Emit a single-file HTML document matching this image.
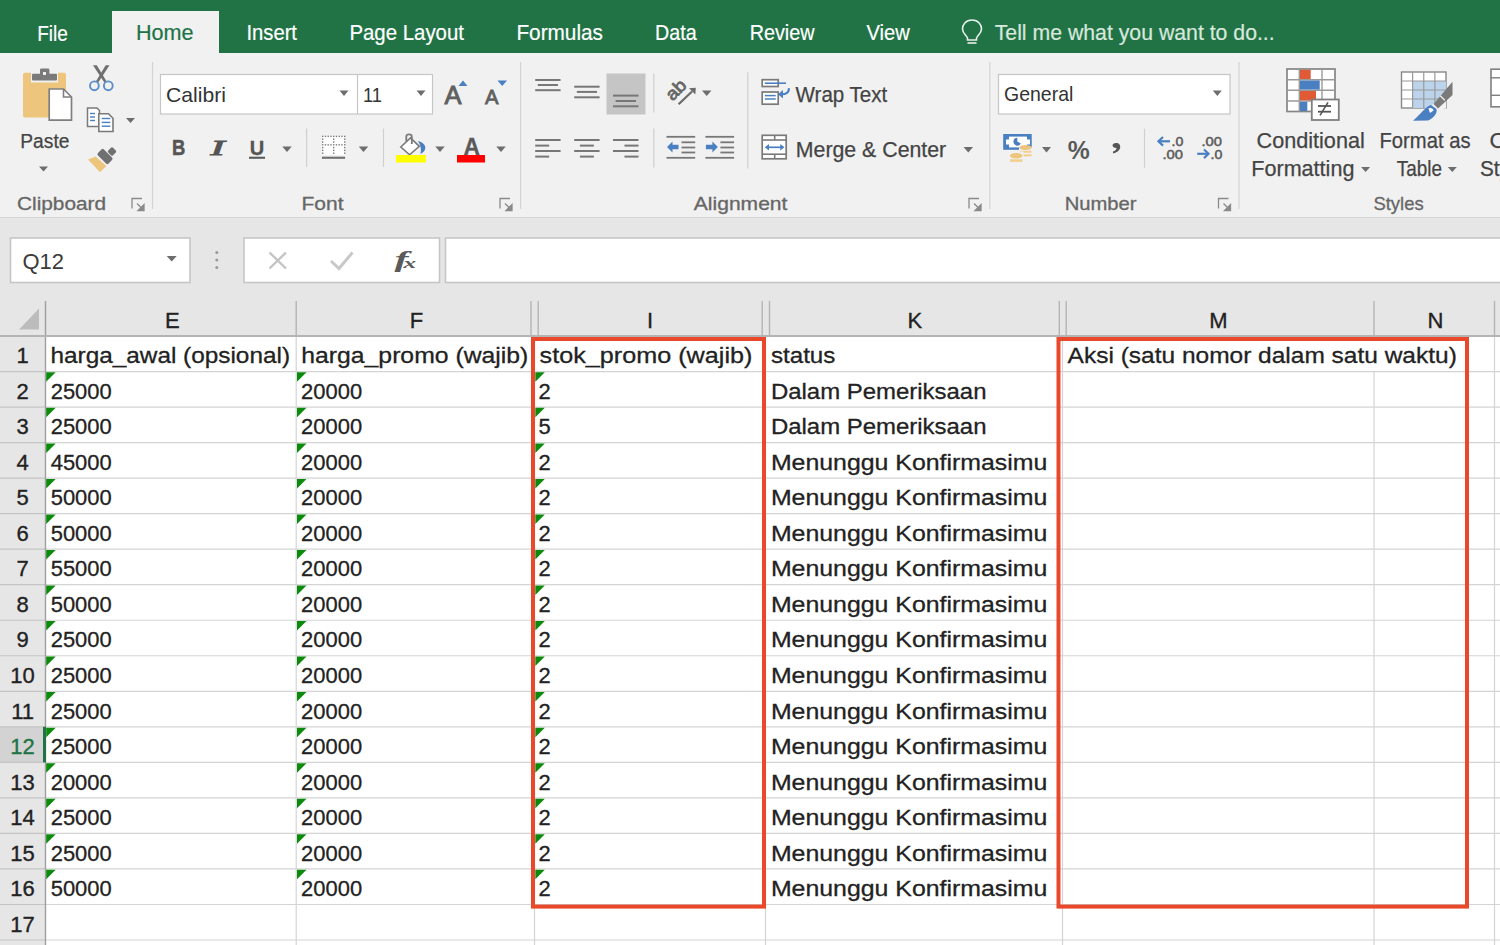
<!DOCTYPE html>
<html><head><meta charset="utf-8"><title>Excel</title>
<style>
html,body{margin:0;padding:0;background:#fff;overflow:hidden;width:1500px;height:945px;}
svg{display:block;font-family:"Liberation Sans",sans-serif;}
</style></head><body>
<svg width="1500" height="945" viewBox="0 0 1500 945"><rect x="0" y="0" width="1500" height="53" fill="#217346"/>
<rect x="0" y="53" width="1500" height="165" fill="#f1f1f1"/>
<rect x="112" y="11" width="107" height="42" fill="#f1f1f1"/>
<rect x="0" y="217" width="1500" height="1" fill="#d6d6d6"/>
<rect x="0" y="218" width="1500" height="83" fill="#e6e6e6"/>
<text x="37.2" y="41.3" font-size="22" fill="#ffffff" font-weight="normal" font-style="normal" font-family="Liberation Sans" textLength="30.6" lengthAdjust="spacingAndGlyphs" stroke="#ffffff" stroke-width="0.2">File</text>
<text x="246.4" y="39.6" font-size="22" fill="#ffffff" font-weight="normal" font-style="normal" font-family="Liberation Sans" textLength="50.6" lengthAdjust="spacingAndGlyphs" stroke="#ffffff" stroke-width="0.2">Insert</text>
<text x="349.4" y="39.6" font-size="22" fill="#ffffff" font-weight="normal" font-style="normal" font-family="Liberation Sans" textLength="114.6" lengthAdjust="spacingAndGlyphs" stroke="#ffffff" stroke-width="0.2">Page Layout</text>
<text x="516.4" y="39.6" font-size="22" fill="#ffffff" font-weight="normal" font-style="normal" font-family="Liberation Sans" textLength="86.6" lengthAdjust="spacingAndGlyphs" stroke="#ffffff" stroke-width="0.2">Formulas</text>
<text x="655.0" y="39.6" font-size="22" fill="#ffffff" font-weight="normal" font-style="normal" font-family="Liberation Sans" textLength="41.6" lengthAdjust="spacingAndGlyphs" stroke="#ffffff" stroke-width="0.2">Data</text>
<text x="749.7" y="39.6" font-size="22" fill="#ffffff" font-weight="normal" font-style="normal" font-family="Liberation Sans" textLength="64.8" lengthAdjust="spacingAndGlyphs" stroke="#ffffff" stroke-width="0.2">Review</text>
<text x="866.5" y="39.6" font-size="22" fill="#ffffff" font-weight="normal" font-style="normal" font-family="Liberation Sans" textLength="43.3" lengthAdjust="spacingAndGlyphs" stroke="#ffffff" stroke-width="0.2">View</text>
<text x="136.0" y="39.6" font-size="22" fill="#217346" font-weight="normal" font-style="normal" font-family="Liberation Sans" textLength="57.6" lengthAdjust="spacingAndGlyphs" stroke="#217346" stroke-width="0.2">Home</text>
<text x="994.7" y="39.6" font-size="22" fill="#d8e8dd" font-weight="normal" font-style="normal" font-family="Liberation Sans" textLength="280.0" lengthAdjust="spacingAndGlyphs" stroke="#d8e8dd" stroke-width="0.2">Tell me what you want to do...</text>
<path d="M972,20 C965.5,20 962.5,25 962.5,29 C962.5,33 966,35 967.5,38 L967.5,40 L976.5,40 L976.5,38 C978,35 981.5,33 981.5,29 C981.5,25 978.5,20 972,20 Z" fill="none" stroke="#e6f0ea" stroke-width="1.6"/>
<line x1="967.5" y1="43" x2="976.5" y2="43" stroke="#e6f0ea" stroke-width="1.6"/>
<path d="M25,72.7 L31,72.7 L31,82.5 L58,82.5 L58,72.7 L64,72.7 Q66,72.7 66,74.7 L66,115.5 Q66,117.5 64,117.5 L25,117.5 Q23,117.5 23,115.5 L23,74.7 Q23,72.7 25,72.7 Z" fill="#edc57c" stroke="none" stroke-width="1"/>
<path d="M33,73.8 L40,73.8 L40,70 Q40,68.6 41.4,68.6 L48,68.6 Q49.4,68.6 49.4,70 L49.4,73.8 L56,73.8 Q57,73.8 57,75 L57,79.5 Q57,80.6 56,80.6 L33,80.6 Q32,80.6 32,79.5 L32,75 Q32,73.8 33,73.8 Z" fill="#7a7a7a" stroke="none" stroke-width="1"/>
<rect x="43" y="72" width="3" height="3" fill="#f1f1f1"/>
<path d="M49.2,89 L63.5,89 L71.5,97 L71.5,120.2 L49.2,120.2 Z" fill="#ffffff" stroke="#7f7f7f" stroke-width="1.7"/>
<path d="M63.5,89 L63.5,97 L71.5,97" fill="none" stroke="#7f7f7f" stroke-width="1.6"/>
<text x="20.3" y="147.8" font-size="20.5" fill="#444" font-weight="normal" font-style="normal" font-family="Liberation Sans" textLength="49.1" lengthAdjust="spacingAndGlyphs" stroke="#444" stroke-width="0.25">Paste</text>
<path d="M39.0,166.5 L48.0,166.5 L43.5,171.5 Z" fill="#6d6d6d" stroke="none" stroke-width="1"/>
<path d="M93,65.2 L96.8,65.2 L106.5,81.2 L104.3,82.6 Z" fill="#6f6f6f" stroke="none" stroke-width="1"/>
<path d="M109.5,65.2 L105.7,65.2 L96,81.2 L98.2,82.6 Z" fill="#6f6f6f" stroke="none" stroke-width="1"/>
<circle cx="94.4" cy="85.8" r="4.4" fill="none" stroke="#5b8fcb" stroke-width="1.9"/>
<circle cx="108.3" cy="85.8" r="4.4" fill="none" stroke="#5b8fcb" stroke-width="1.9"/>
<path d="M87.5,108 L97,108 L99.5,110.5 L99.5,126.5 L87.5,126.5 Z" fill="#fff" stroke="#7a7a7a" stroke-width="1.5"/>
<path d="M98.8,113.8 L108.5,113.8 L113,118.3 L113,131.5 L98.8,131.5 Z" fill="#fff" stroke="#7a7a7a" stroke-width="1.6"/>
<line x1="90" y1="113.5" x2="95" y2="113.5" stroke="#4a7fc1" stroke-width="1.4"/>
<line x1="90" y1="117" x2="95" y2="117" stroke="#4a7fc1" stroke-width="1.4"/>
<line x1="90" y1="120.5" x2="95" y2="120.5" stroke="#4a7fc1" stroke-width="1.4"/>
<line x1="101.7" y1="118.5" x2="110.3" y2="118.5" stroke="#4a7fc1" stroke-width="1.4"/>
<line x1="101.7" y1="122.4" x2="110.3" y2="122.4" stroke="#4a7fc1" stroke-width="1.4"/>
<line x1="101.7" y1="126.2" x2="110.3" y2="126.2" stroke="#4a7fc1" stroke-width="1.4"/>
<path d="M126.0,118 L135.0,118 L130.5,123 Z" fill="#6d6d6d" stroke="none" stroke-width="1"/>
<path d="M88,159.5 L95.5,156.5 L106.5,166 L100,172.3 Z" fill="#edc57c" stroke="none" stroke-width="1"/>
<rect x="-7.5" y="-4.2" width="15" height="8.4" rx="1.8" fill="#707070" transform="translate(105,156.5) rotate(45)"/>
<rect x="-3.4" y="-3.4" width="6.8" height="6.8" rx="1.5" fill="#707070" transform="translate(112,151.5) rotate(45)"/>
<text x="17.0" y="210.2" font-size="18.5" fill="#666" font-weight="normal" font-style="normal" font-family="Liberation Sans" textLength="89.0" lengthAdjust="spacingAndGlyphs" stroke="#666" stroke-width="0.3">Clipboard</text>
<path d="M132,208.5 L132,198.5 L142,198.5" fill="none" stroke="#8a8a8a" stroke-width="1.3"/>
<path d="M137,203.5 L143,209.5 M144,204.5 L144,210.5 L138,210.5 Z" fill="#8a8a8a" stroke="#8a8a8a" stroke-width="1.3"/>
<line x1="152.5" y1="62" x2="152.5" y2="209" stroke="#d4d4d4" stroke-width="1.2"/>
<rect x="160.5" y="74.5" width="272" height="39.5" fill="#ffffff" stroke="#c6c6c6" stroke-width="1.2"/>
<line x1="357.5" y1="75" x2="357.5" y2="114" stroke="#c6c6c6" stroke-width="1.2"/>
<text x="166.0" y="101.6" font-size="21" fill="#333" font-weight="normal" font-style="normal" font-family="Liberation Sans" textLength="60.0" lengthAdjust="spacingAndGlyphs">Calibri</text>
<path d="M339.5,90.5 L348.5,90.5 L344,96.0 Z" fill="#6d6d6d" stroke="none" stroke-width="1"/>
<text x="363.0" y="101.6" font-size="21" fill="#333" font-weight="normal" font-style="normal" font-family="Liberation Sans" textLength="19.0" lengthAdjust="spacingAndGlyphs">11</text>
<path d="M416.5,90.5 L425.5,90.5 L421,96.0 Z" fill="#6d6d6d" stroke="none" stroke-width="1"/>
<text x="444.5" y="104.0" font-size="25" fill="#606060" font-weight="normal" font-style="normal" font-family="Liberation Sans" textLength="17.0" lengthAdjust="spacingAndGlyphs" stroke="#606060" stroke-width="0.9">A</text>
<path d="M458.5,86 L467.5,86 L463,80.5 Z" fill="#4a7fc1" stroke="none" stroke-width="1"/>
<text x="485.0" y="104.0" font-size="20" fill="#606060" font-weight="normal" font-style="normal" font-family="Liberation Sans" textLength="13.5" lengthAdjust="spacingAndGlyphs" stroke="#606060" stroke-width="0.8">A</text>
<path d="M497.5,80.5 L507,80.5 L502.2,86 Z" fill="#4a7fc1" stroke="none" stroke-width="1"/>
<text x="172.0" y="155.3" font-size="21.5" fill="#555" font-weight="bold" font-style="normal" font-family="Liberation Sans" textLength="13.3" lengthAdjust="spacingAndGlyphs" stroke="#555" stroke-width="0.5">B</text>
<text x="210.5" y="155.3" font-size="21.5" fill="#555" font-weight="normal" font-style="italic" font-family="Liberation Serif" textLength="14.0" lengthAdjust="spacingAndGlyphs" stroke="#555" stroke-width="0.9">I</text>
<text x="249.8" y="155.0" font-size="21" fill="#555" font-weight="bold" font-style="normal" font-family="Liberation Sans" textLength="14.5" lengthAdjust="spacingAndGlyphs" stroke="#555" stroke-width="0.3">U</text>
<rect x="249" y="156.7" width="16" height="2.1" fill="#5a5a5a"/>
<path d="M282.25,146.5 L291.75,146.5 L287,152.0 Z" fill="#6d6d6d" stroke="none" stroke-width="1"/>
<line x1="306.6" y1="128.5" x2="306.6" y2="167" stroke="#d0d0d0" stroke-width="1.2"/>
<rect x="322" y="136" width="23" height="19" fill="#ffffff"/>
<rect x="322.0" y="135.7" width="1.4" height="1.4" fill="#7a7a7a"/>
<rect x="322.0" y="138.5" width="1.4" height="1.4" fill="#7a7a7a"/>
<rect x="322.0" y="141.3" width="1.4" height="1.4" fill="#7a7a7a"/>
<rect x="322.0" y="144.1" width="1.4" height="1.4" fill="#7a7a7a"/>
<rect x="322.0" y="146.9" width="1.4" height="1.4" fill="#7a7a7a"/>
<rect x="322.0" y="149.7" width="1.4" height="1.4" fill="#7a7a7a"/>
<rect x="322.0" y="152.5" width="1.4" height="1.4" fill="#7a7a7a"/>
<rect x="324.75" y="135.7" width="1.4" height="1.4" fill="#7a7a7a"/>
<rect x="324.75" y="144.1" width="1.4" height="1.4" fill="#7a7a7a"/>
<rect x="327.5" y="135.7" width="1.4" height="1.4" fill="#7a7a7a"/>
<rect x="327.5" y="144.1" width="1.4" height="1.4" fill="#7a7a7a"/>
<rect x="330.25" y="135.7" width="1.4" height="1.4" fill="#7a7a7a"/>
<rect x="330.25" y="144.1" width="1.4" height="1.4" fill="#7a7a7a"/>
<rect x="333.0" y="135.7" width="1.4" height="1.4" fill="#7a7a7a"/>
<rect x="333.0" y="138.5" width="1.4" height="1.4" fill="#7a7a7a"/>
<rect x="333.0" y="141.3" width="1.4" height="1.4" fill="#7a7a7a"/>
<rect x="333.0" y="144.1" width="1.4" height="1.4" fill="#7a7a7a"/>
<rect x="333.0" y="146.9" width="1.4" height="1.4" fill="#7a7a7a"/>
<rect x="333.0" y="149.7" width="1.4" height="1.4" fill="#7a7a7a"/>
<rect x="333.0" y="152.5" width="1.4" height="1.4" fill="#7a7a7a"/>
<rect x="335.75" y="135.7" width="1.4" height="1.4" fill="#7a7a7a"/>
<rect x="335.75" y="144.1" width="1.4" height="1.4" fill="#7a7a7a"/>
<rect x="338.5" y="135.7" width="1.4" height="1.4" fill="#7a7a7a"/>
<rect x="338.5" y="144.1" width="1.4" height="1.4" fill="#7a7a7a"/>
<rect x="341.25" y="135.7" width="1.4" height="1.4" fill="#7a7a7a"/>
<rect x="341.25" y="144.1" width="1.4" height="1.4" fill="#7a7a7a"/>
<rect x="344.0" y="135.7" width="1.4" height="1.4" fill="#7a7a7a"/>
<rect x="344.0" y="138.5" width="1.4" height="1.4" fill="#7a7a7a"/>
<rect x="344.0" y="141.3" width="1.4" height="1.4" fill="#7a7a7a"/>
<rect x="344.0" y="144.1" width="1.4" height="1.4" fill="#7a7a7a"/>
<rect x="344.0" y="146.9" width="1.4" height="1.4" fill="#7a7a7a"/>
<rect x="344.0" y="149.7" width="1.4" height="1.4" fill="#7a7a7a"/>
<rect x="344.0" y="152.5" width="1.4" height="1.4" fill="#7a7a7a"/>
<rect x="321.9" y="156.7" width="23.2" height="2.1" fill="#6f6f6f"/>
<path d="M358.75,146.5 L368.25,146.5 L363.5,152.0 Z" fill="#6d6d6d" stroke="none" stroke-width="1"/>
<line x1="383.5" y1="128.5" x2="383.5" y2="167" stroke="#d0d0d0" stroke-width="1.2"/>
<path d="M400.8,147 L410.5,137.8 L419.3,146.3 L409.6,154.8 Z" fill="#fff" stroke="#7a7a7a" stroke-width="1.6"/>
<path d="M406.3,141.5 L406.3,136.3 Q406.3,134.3 409,134.3 Q411.8,134.3 411.8,136.3 L411.8,144" fill="none" stroke="#7a7a7a" stroke-width="1.8"/>
<path d="M418,141 C423,142 426.5,146 425,149.5 C424.3,151.5 422,153.5 420.4,154 C421.5,150 421,146 418,141 Z" fill="#4a7fc1" stroke="none" stroke-width="1"/>
<rect x="396" y="155" width="30" height="7.5" fill="#ffff00"/>
<path d="M435.25,146.5 L444.75,146.5 L440,152.0 Z" fill="#6d6d6d" stroke="none" stroke-width="1"/>
<text x="463.5" y="155.2" font-size="24" fill="#5a5a5a" font-weight="bold" font-style="normal" font-family="Liberation Sans" textLength="16.5" lengthAdjust="spacingAndGlyphs" stroke="#5a5a5a" stroke-width="0.3">A</text>
<rect x="457" y="155" width="28" height="7.5" fill="#ff0000"/>
<path d="M496.25,146.5 L505.75,146.5 L501,152.0 Z" fill="#6d6d6d" stroke="none" stroke-width="1"/>
<text x="301.5" y="210.4" font-size="18.5" fill="#666" font-weight="normal" font-style="normal" font-family="Liberation Sans" textLength="42.0" lengthAdjust="spacingAndGlyphs" stroke="#666" stroke-width="0.3">Font</text>
<path d="M500,208.5 L500,198.5 L510,198.5" fill="none" stroke="#8a8a8a" stroke-width="1.3"/>
<path d="M505,203.5 L511,209.5 M512,204.5 L512,210.5 L506,210.5 Z" fill="#8a8a8a" stroke="#8a8a8a" stroke-width="1.3"/>
<line x1="520.6" y1="62" x2="520.6" y2="209" stroke="#d4d4d4" stroke-width="1.2"/>
<line x1="535.2" y1="80" x2="560.6" y2="80" stroke="#777" stroke-width="2"/>
<line x1="537.8" y1="85" x2="558" y2="85" stroke="#777" stroke-width="2"/>
<line x1="535.2" y1="90.2" x2="560.6" y2="90.2" stroke="#777" stroke-width="2"/>
<line x1="574.2" y1="86.7" x2="599.6" y2="86.7" stroke="#777" stroke-width="2"/>
<line x1="576.8" y1="91.9" x2="597" y2="91.9" stroke="#777" stroke-width="2"/>
<line x1="574.2" y1="97.3" x2="599.6" y2="97.3" stroke="#777" stroke-width="2"/>
<rect x="606.5" y="73.5" width="39" height="41" fill="#c5c5c5"/>
<line x1="613" y1="95.6" x2="638.5" y2="95.6" stroke="#777" stroke-width="2"/>
<line x1="615.6" y1="101" x2="636" y2="101" stroke="#777" stroke-width="2"/>
<line x1="613" y1="106.3" x2="638.5" y2="106.3" stroke="#777" stroke-width="2"/>
<line x1="653.8" y1="73.5" x2="653.8" y2="112.5" stroke="#d0d0d0" stroke-width="1.2"/>
<text x="672.5" y="101.5" font-size="17.5" fill="#666" font-weight="normal" font-style="normal" font-family="Liberation Sans" textLength="21.5" lengthAdjust="spacingAndGlyphs" stroke="#666" stroke-width="0.8" transform="rotate(-45 672.5 101.5)">ab</text>
<path d="M678.6,104.3 L692,91.5" fill="none" stroke="#6a6a6a" stroke-width="2.2"/>
<path d="M695.8,87.8 L689,88.3 L695.3,94.6 Z" fill="#6a6a6a" stroke="none" stroke-width="1"/>
<path d="M701.95,90.5 L711.45,90.5 L706.7,96.0 Z" fill="#6d6d6d" stroke="none" stroke-width="1"/>
<line x1="535.2" y1="140" x2="560.6" y2="140" stroke="#777" stroke-width="2"/>
<line x1="535.2" y1="145.6" x2="549.1700000000001" y2="145.6" stroke="#777" stroke-width="2"/>
<line x1="535.2" y1="151" x2="560.6" y2="151" stroke="#777" stroke-width="2"/>
<line x1="535.2" y1="156.6" x2="549.1700000000001" y2="156.6" stroke="#777" stroke-width="2"/>
<line x1="574.2" y1="140" x2="599.6" y2="140" stroke="#777" stroke-width="2"/>
<line x1="579.9150000000001" y1="145.6" x2="593.8850000000001" y2="145.6" stroke="#777" stroke-width="2"/>
<line x1="574.2" y1="151" x2="599.6" y2="151" stroke="#777" stroke-width="2"/>
<line x1="579.9150000000001" y1="156.6" x2="593.8850000000001" y2="156.6" stroke="#777" stroke-width="2"/>
<line x1="613" y1="140" x2="638.5" y2="140" stroke="#777" stroke-width="2"/>
<line x1="624.475" y1="145.6" x2="638.5" y2="145.6" stroke="#777" stroke-width="2"/>
<line x1="613" y1="151" x2="638.5" y2="151" stroke="#777" stroke-width="2"/>
<line x1="624.475" y1="156.6" x2="638.5" y2="156.6" stroke="#777" stroke-width="2"/>
<line x1="653.8" y1="128.5" x2="653.8" y2="167.5" stroke="#d0d0d0" stroke-width="1.2"/>
<line x1="666.5" y1="136.8" x2="695.2" y2="136.8" stroke="#777" stroke-width="1.8"/>
<line x1="681.5" y1="142.3" x2="695.2" y2="142.3" stroke="#777" stroke-width="1.8"/>
<line x1="681.5" y1="147.5" x2="695.2" y2="147.5" stroke="#777" stroke-width="1.8"/>
<line x1="681.5" y1="152.5" x2="695.2" y2="152.5" stroke="#777" stroke-width="1.8"/>
<line x1="666.5" y1="157.8" x2="695.2" y2="157.8" stroke="#777" stroke-width="1.8"/>
<path d="M667.0,147 L672.5,141.5 L672.5,144.8 L678.5,144.8 L678.5,149.2 L672.5,149.2 L672.5,152.5 Z" fill="#4a7fc1" stroke="none" stroke-width="1"/>
<line x1="705.4" y1="136.8" x2="734.1" y2="136.8" stroke="#777" stroke-width="1.8"/>
<line x1="720.4" y1="142.3" x2="734.1" y2="142.3" stroke="#777" stroke-width="1.8"/>
<line x1="720.4" y1="147.5" x2="734.1" y2="147.5" stroke="#777" stroke-width="1.8"/>
<line x1="720.4" y1="152.5" x2="734.1" y2="152.5" stroke="#777" stroke-width="1.8"/>
<line x1="705.4" y1="157.8" x2="734.1" y2="157.8" stroke="#777" stroke-width="1.8"/>
<path d="M717.9,147 L712.4,141.5 L712.4,144.8 L705.9,144.8 L705.9,149.2 L712.4,149.2 L712.4,152.5 Z" fill="#4a7fc1" stroke="none" stroke-width="1"/>
<line x1="747.8" y1="72.3" x2="747.8" y2="168.5" stroke="#d0d0d0" stroke-width="1.2"/>
<rect x="762.2" y="79.7" width="16" height="6.8" fill="#fff" stroke="#7a7a7a" stroke-width="1.7"/>
<line x1="764.8" y1="83.2" x2="786" y2="83.2" stroke="#4a7fc1" stroke-width="1.6"/>
<rect x="762.2" y="92" width="16" height="12.2" fill="#fff" stroke="#7a7a7a" stroke-width="1.7"/>
<line x1="764.8" y1="95.6" x2="775.7" y2="95.6" stroke="#4a7fc1" stroke-width="1.5"/>
<line x1="764.8" y1="99" x2="775.7" y2="99" stroke="#4a7fc1" stroke-width="1.5"/>
<path d="M788.8,88.2 C789.5,92.5 786,94.5 781,94.3" fill="none" stroke="#4a7fc1" stroke-width="2"/>
<path d="M778,94.2 L783,90 L783,98.5 Z" fill="#4a7fc1" stroke="none" stroke-width="1"/>
<text x="795.5" y="101.8" font-size="21.5" fill="#444" font-weight="normal" font-style="normal" font-family="Liberation Sans" textLength="91.8" lengthAdjust="spacingAndGlyphs" stroke="#444" stroke-width="0.25">Wrap Text</text>
<rect x="762.2" y="135.3" width="24" height="23.5" fill="#fff" stroke="#7a7a7a" stroke-width="1.7"/>
<line x1="762.2" y1="140" x2="786.2" y2="140" stroke="#7a7a7a" stroke-width="1.6"/>
<line x1="762.2" y1="154.2" x2="786.2" y2="154.2" stroke="#7a7a7a" stroke-width="1.6"/>
<line x1="774.7" y1="135.3" x2="774.7" y2="140" stroke="#7a7a7a" stroke-width="1.6"/>
<line x1="774.7" y1="154.2" x2="774.7" y2="158.8" stroke="#7a7a7a" stroke-width="1.6"/>
<line x1="767" y1="147.3" x2="782" y2="147.3" stroke="#4a7fc1" stroke-width="1.7"/>
<path d="M764.8,147.3 L769,144 L769,150.6 Z M784.5,147.3 L780.3,144 L780.3,150.6 Z" fill="#4a7fc1" stroke="none" stroke-width="1"/>
<text x="795.8" y="157.0" font-size="21.5" fill="#444" font-weight="normal" font-style="normal" font-family="Liberation Sans" textLength="150.4" lengthAdjust="spacingAndGlyphs" stroke="#444" stroke-width="0.25">Merge &amp; Center</text>
<path d="M963.55,147 L973.05,147 L968.3,152.5 Z" fill="#6d6d6d" stroke="none" stroke-width="1"/>
<text x="693.8" y="210.4" font-size="18.5" fill="#666" font-weight="normal" font-style="normal" font-family="Liberation Sans" textLength="93.6" lengthAdjust="spacingAndGlyphs" stroke="#666" stroke-width="0.3">Alignment</text>
<path d="M969,208.5 L969,198.5 L979,198.5" fill="none" stroke="#8a8a8a" stroke-width="1.3"/>
<path d="M974,203.5 L980,209.5 M981,204.5 L981,210.5 L975,210.5 Z" fill="#8a8a8a" stroke="#8a8a8a" stroke-width="1.3"/>
<line x1="989.8" y1="62" x2="989.8" y2="209" stroke="#d4d4d4" stroke-width="1.2"/>
<rect x="998.5" y="74.5" width="231.5" height="39.5" fill="#ffffff" stroke="#c6c6c6" stroke-width="1.2"/>
<text x="1004.0" y="101.4" font-size="21" fill="#333" font-weight="normal" font-style="normal" font-family="Liberation Sans" textLength="69.4" lengthAdjust="spacingAndGlyphs">General</text>
<path d="M1212.8,90.5 L1221.8,90.5 L1217.3,96.0 Z" fill="#6d6d6d" stroke="none" stroke-width="1"/>
<rect x="1003.2" y="134" width="28.5" height="15.8" fill="#4a7fc1"/>
<rect x="1009" y="136.6" width="18" height="10.8" fill="#fff"/>
<rect x="1006" y="139.5" width="24" height="5" fill="#fff"/>
<path d="M1017.3,137.8 A3.9,3.9 0 1 0 1020.8,143.5 L1017.3,141.6 Z" fill="#4a7fc1" stroke="none" stroke-width="1"/>
<rect x="1019" y="147" width="13" height="9.5" fill="#f1f1f1"/>
<ellipse cx="1025.5" cy="147.5" rx="6.2" ry="2.6" fill="#edc57c"/>
<rect x="1020" y="150.8" width="11.5" height="2" fill="#f3cf8f"/>
<rect x="1020.5" y="154.2" width="11" height="2.2" fill="#f3cf8f"/>
<rect x="1009" y="151.5" width="14.5" height="12" fill="#f1f1f1"/>
<ellipse cx="1016.2" cy="155.8" rx="6.3" ry="2.8" fill="#edc57c"/>
<rect x="1010" y="159.3" width="12.5" height="2.6" fill="#f3cf8f"/>
<path d="M1042.0,147 L1051.0,147 L1046.5,152.5 Z" fill="#6d6d6d" stroke="none" stroke-width="1"/>
<text x="1067.8" y="159.0" font-size="26" fill="#5a5a5a" font-weight="bold" font-style="normal" font-family="Liberation Sans" textLength="22.0" lengthAdjust="spacingAndGlyphs">%</text>
<path d="M1116,143 C1119,143 1121,145 1120,148.5 C1119,151 1116,153 1113,153.5 L1113,151.5 C1115,151 1116.5,149.5 1116.5,148 C1114,148 1112.5,146.5 1112.5,145.5 C1112.5,144 1114,143 1116,143 Z" fill="#555" stroke="none" stroke-width="1"/>
<line x1="1144.5" y1="128.7" x2="1144.5" y2="167.7" stroke="#d0d0d0" stroke-width="1.2"/>
<text x="1171.5" y="146.0" font-size="13.5" fill="#5a5a5a" font-weight="normal" font-style="normal" font-family="Liberation Sans" textLength="11.8" lengthAdjust="spacingAndGlyphs" stroke="#5a5a5a" stroke-width="0.5">.0</text>
<text x="1162.5" y="159.0" font-size="13.5" fill="#5a5a5a" font-weight="normal" font-style="normal" font-family="Liberation Sans" textLength="20.5" lengthAdjust="spacingAndGlyphs" stroke="#5a5a5a" stroke-width="0.5">.00</text>
<path d="M1158.5,141.3 L1170,141.3" fill="none" stroke="#4a7fc1" stroke-width="2.2"/>
<path d="M1163,137 L1158.5,141.3 L1163,145.6" fill="none" stroke="#4a7fc1" stroke-width="2.2"/>
<text x="1201.5" y="146.0" font-size="13.5" fill="#5a5a5a" font-weight="normal" font-style="normal" font-family="Liberation Sans" textLength="20.5" lengthAdjust="spacingAndGlyphs" stroke="#5a5a5a" stroke-width="0.5">.00</text>
<text x="1210.5" y="159.0" font-size="13.5" fill="#5a5a5a" font-weight="normal" font-style="normal" font-family="Liberation Sans" textLength="11.8" lengthAdjust="spacingAndGlyphs" stroke="#5a5a5a" stroke-width="0.5">.0</text>
<path d="M1197.2,153.8 L1208.5,153.8" fill="none" stroke="#4a7fc1" stroke-width="2.2"/>
<path d="M1204,149.5 L1208.5,153.8 L1204,158.1" fill="none" stroke="#4a7fc1" stroke-width="2.2"/>
<text x="1064.7" y="210.4" font-size="18.5" fill="#666" font-weight="normal" font-style="normal" font-family="Liberation Sans" textLength="71.9" lengthAdjust="spacingAndGlyphs" stroke="#666" stroke-width="0.3">Number</text>
<path d="M1218.5,208.5 L1218.5,198.5 L1228.5,198.5" fill="none" stroke="#8a8a8a" stroke-width="1.3"/>
<path d="M1223.5,203.5 L1229.5,209.5 M1230.5,204.5 L1230.5,210.5 L1224.5,210.5 Z" fill="#8a8a8a" stroke="#8a8a8a" stroke-width="1.3"/>
<line x1="1239" y1="62" x2="1239" y2="209" stroke="#d4d4d4" stroke-width="1.2"/>
<rect x="1287" y="69" width="48" height="42.5" fill="#fff" stroke="#858585" stroke-width="1.7"/>
<line x1="1299.3" y1="69" x2="1299.3" y2="111.5" stroke="#9a9a9a" stroke-width="1.4"/>
<line x1="1322" y1="69" x2="1322" y2="111.5" stroke="#9a9a9a" stroke-width="1.4"/>
<line x1="1287" y1="79.7" x2="1335" y2="79.7" stroke="#9a9a9a" stroke-width="1.4"/>
<line x1="1287" y1="90.2" x2="1335" y2="90.2" stroke="#9a9a9a" stroke-width="1.4"/>
<line x1="1287" y1="101" x2="1335" y2="101" stroke="#9a9a9a" stroke-width="1.4"/>
<rect x="1300" y="69.8" width="10.7" height="9.2" fill="#e05b35"/>
<rect x="1300" y="80.5" width="19.7" height="9" fill="#4a7fc1"/>
<rect x="1300" y="91" width="16" height="9.3" fill="#e05b35"/>
<rect x="1300" y="101.8" width="7.3" height="9.2" fill="#4a7fc1"/>
<rect x="1311.8" y="99.5" width="27" height="20.5" fill="#fff" stroke="#7f7f7f" stroke-width="1.8"/>
<line x1="1318" y1="106" x2="1331" y2="106" stroke="#555" stroke-width="1.8"/>
<line x1="1318" y1="111.7" x2="1331" y2="111.7" stroke="#555" stroke-width="1.8"/>
<line x1="1320" y1="115.3" x2="1328" y2="102.3" stroke="#555" stroke-width="1.6"/>
<text x="1256.5" y="147.7" font-size="21.5" fill="#444" font-weight="normal" font-style="normal" font-family="Liberation Sans" textLength="108.3" lengthAdjust="spacingAndGlyphs" stroke="#444" stroke-width="0.25">Conditional</text>
<text x="1251.3" y="176.3" font-size="21.5" fill="#444" font-weight="normal" font-style="normal" font-family="Liberation Sans" textLength="103.1" lengthAdjust="spacingAndGlyphs" stroke="#444" stroke-width="0.25">Formatting</text>
<path d="M1361.1,167 L1370.1,167 L1365.6,172 Z" fill="#6d6d6d" stroke="none" stroke-width="1"/>
<rect x="1401.5" y="72" width="44.5" height="36" fill="#fff" stroke="#888" stroke-width="1.4"/>
<rect x="1412.625" y="81.0" width="33.375" height="27.0" fill="#bcd3ec"/>
<line x1="1412.625" y1="72" x2="1412.625" y2="108" stroke="#999" stroke-width="1.2"/>
<line x1="1401.5" y1="81.0" x2="1446.0" y2="81.0" stroke="#999" stroke-width="1.2"/>
<line x1="1423.75" y1="72" x2="1423.75" y2="108" stroke="#999" stroke-width="1.2"/>
<line x1="1401.5" y1="90.0" x2="1446.0" y2="90.0" stroke="#999" stroke-width="1.2"/>
<line x1="1434.875" y1="72" x2="1434.875" y2="108" stroke="#999" stroke-width="1.2"/>
<line x1="1401.5" y1="99.0" x2="1446.0" y2="99.0" stroke="#999" stroke-width="1.2"/>
<path d="M1446,108.5 L1446,93 L1424,112 Z" fill="#f1f1f1" stroke="none" stroke-width="1"/>
<path d="M1452.5,81.8 L1452.5,95 L1438,108.5 L1433.5,104 Z" fill="#7a7a7a" stroke="none" stroke-width="1"/>
<path d="M1440.3,95.8 L1444.7,100.2" fill="none" stroke="#f1f1f1" stroke-width="1.3"/>
<path d="M1431,105 C1427,106 1424,110 1420,114 C1417,117 1414,120 1413,120.8 L1428,120.5 C1434,118 1437.5,113 1436.5,109 Z" fill="#4a7fc1" stroke="none" stroke-width="1"/>
<path d="M1428.5,108.5 C1431,107.5 1433,108.5 1433.5,110.5 L1430,113 Z" fill="#ffffff" stroke="none" stroke-width="1"/>
<text x="1379.5" y="147.7" font-size="21.5" fill="#444" font-weight="normal" font-style="normal" font-family="Liberation Sans" textLength="91.0" lengthAdjust="spacingAndGlyphs" stroke="#444" stroke-width="0.25">Format as</text>
<text x="1396.8" y="176.3" font-size="21.5" fill="#444" font-weight="normal" font-style="normal" font-family="Liberation Sans" textLength="45.2" lengthAdjust="spacingAndGlyphs" stroke="#444" stroke-width="0.25">Table</text>
<path d="M1447.8,167 L1456.8,167 L1452.3,172 Z" fill="#6d6d6d" stroke="none" stroke-width="1"/>
<rect x="1491" y="69.2" width="20" height="37.6" fill="#fff" stroke="#7f7f7f" stroke-width="1.6"/>
<line x1="1491" y1="77.8" x2="1500" y2="77.8" stroke="#7f7f7f" stroke-width="1.4"/>
<line x1="1491" y1="95.3" x2="1500" y2="95.3" stroke="#7f7f7f" stroke-width="1.4"/>
<text x="1489.5" y="147.7" font-size="21.5" fill="#444" font-weight="normal" font-style="normal" font-family="Liberation Sans" textLength="16.0" lengthAdjust="spacingAndGlyphs" stroke="#444" stroke-width="0.25">C</text>
<text x="1480.0" y="176.3" font-size="21.5" fill="#444" font-weight="normal" font-style="normal" font-family="Liberation Sans" textLength="30.0" lengthAdjust="spacingAndGlyphs" stroke="#444" stroke-width="0.25">Sty</text>
<text x="1373.4" y="210.4" font-size="18.5" fill="#666" font-weight="normal" font-style="normal" font-family="Liberation Sans" textLength="50.3" lengthAdjust="spacingAndGlyphs" stroke="#666" stroke-width="0.3">Styles</text>
<rect x="10.5" y="238" width="179.5" height="44.5" fill="#fff" stroke="#c6c6c6" stroke-width="1.6"/>
<text x="22.5" y="269.0" font-size="22" fill="#3a3a3a" font-weight="normal" font-style="normal" font-family="Liberation Sans" textLength="41.5" lengthAdjust="spacingAndGlyphs">Q12</text>
<path d="M166.7,256 L176.7,256 L171.7,261.5 Z" fill="#6d6d6d" stroke="none" stroke-width="1"/>
<circle cx="216.8" cy="252.5" r="1.5" fill="#9a9a9a"/>
<circle cx="216.8" cy="260" r="1.5" fill="#9a9a9a"/>
<circle cx="216.8" cy="267.5" r="1.5" fill="#9a9a9a"/>
<rect x="244" y="238" width="195.5" height="44.5" fill="#fff" stroke="#c6c6c6" stroke-width="1.6"/>
<path d="M269.5,252.5 L286,268.5 M286,252.5 L269.5,268.5" fill="none" stroke="#c4c4c4" stroke-width="2.4"/>
<path d="M331,261 L339,268.5 L352.5,252.5" fill="none" stroke="#c8c8c8" stroke-width="3"/>
<text x="394.5" y="266.5" font-size="23" fill="#5a5a5a" font-weight="bold" font-style="italic" font-family="Liberation Serif" textLength="14.0" lengthAdjust="spacingAndGlyphs">f</text>
<text x="403.5" y="267.6" font-size="15" fill="#5a5a5a" font-weight="bold" font-style="italic" font-family="Liberation Serif" textLength="12.5" lengthAdjust="spacingAndGlyphs">x</text>
<rect x="445.5" y="238" width="1060" height="44.5" fill="#fff" stroke="#c6c6c6" stroke-width="1.6"/>
<rect x="0" y="301" width="1500" height="35" fill="#e6e6e6"/>
<rect x="0" y="336" width="45.5" height="609" fill="#e6e6e6"/>
<rect x="45.5" y="337" width="1454.5" height="609" fill="#ffffff"/>
<path d="M19,329.5 L39,329.5 L39,308.5 Z" fill="#bcbcbc" stroke="none" stroke-width="1"/>
<rect x="0" y="726.83" width="45.5" height="35.53" fill="#d3d3d3"/>
<line x1="296.2" y1="336" x2="296.2" y2="945" stroke="#d4d4d4" stroke-width="1.2"/>
<line x1="534.5" y1="336" x2="534.5" y2="945" stroke="#d4d4d4" stroke-width="1.2"/>
<line x1="765.5" y1="336" x2="765.5" y2="945" stroke="#d4d4d4" stroke-width="1.2"/>
<line x1="1062.5" y1="336" x2="1062.5" y2="945" stroke="#d4d4d4" stroke-width="1.2"/>
<line x1="1374" y1="371.53" x2="1374" y2="945" stroke="#d4d4d4" stroke-width="1.2"/>
<line x1="1494.5" y1="336" x2="1494.5" y2="945" stroke="#d4d4d4" stroke-width="1.2"/>
<line x1="45.5" y1="371.53" x2="1500" y2="371.53" stroke="#d4d4d4" stroke-width="1.2"/>
<line x1="0" y1="371.53" x2="45.5" y2="371.53" stroke="#c4c4c4" stroke-width="1.2"/>
<line x1="45.5" y1="407.06" x2="1500" y2="407.06" stroke="#d4d4d4" stroke-width="1.2"/>
<line x1="0" y1="407.06" x2="45.5" y2="407.06" stroke="#c4c4c4" stroke-width="1.2"/>
<line x1="45.5" y1="442.59000000000003" x2="1500" y2="442.59000000000003" stroke="#d4d4d4" stroke-width="1.2"/>
<line x1="0" y1="442.59000000000003" x2="45.5" y2="442.59000000000003" stroke="#c4c4c4" stroke-width="1.2"/>
<line x1="45.5" y1="478.12" x2="1500" y2="478.12" stroke="#d4d4d4" stroke-width="1.2"/>
<line x1="0" y1="478.12" x2="45.5" y2="478.12" stroke="#c4c4c4" stroke-width="1.2"/>
<line x1="45.5" y1="513.65" x2="1500" y2="513.65" stroke="#d4d4d4" stroke-width="1.2"/>
<line x1="0" y1="513.65" x2="45.5" y2="513.65" stroke="#c4c4c4" stroke-width="1.2"/>
<line x1="45.5" y1="549.1800000000001" x2="1500" y2="549.1800000000001" stroke="#d4d4d4" stroke-width="1.2"/>
<line x1="0" y1="549.1800000000001" x2="45.5" y2="549.1800000000001" stroke="#c4c4c4" stroke-width="1.2"/>
<line x1="45.5" y1="584.71" x2="1500" y2="584.71" stroke="#d4d4d4" stroke-width="1.2"/>
<line x1="0" y1="584.71" x2="45.5" y2="584.71" stroke="#c4c4c4" stroke-width="1.2"/>
<line x1="45.5" y1="620.24" x2="1500" y2="620.24" stroke="#d4d4d4" stroke-width="1.2"/>
<line x1="0" y1="620.24" x2="45.5" y2="620.24" stroke="#c4c4c4" stroke-width="1.2"/>
<line x1="45.5" y1="655.77" x2="1500" y2="655.77" stroke="#d4d4d4" stroke-width="1.2"/>
<line x1="0" y1="655.77" x2="45.5" y2="655.77" stroke="#c4c4c4" stroke-width="1.2"/>
<line x1="45.5" y1="691.3" x2="1500" y2="691.3" stroke="#d4d4d4" stroke-width="1.2"/>
<line x1="0" y1="691.3" x2="45.5" y2="691.3" stroke="#c4c4c4" stroke-width="1.2"/>
<line x1="45.5" y1="726.83" x2="1500" y2="726.83" stroke="#d4d4d4" stroke-width="1.2"/>
<line x1="0" y1="726.83" x2="45.5" y2="726.83" stroke="#c4c4c4" stroke-width="1.2"/>
<line x1="45.5" y1="762.36" x2="1500" y2="762.36" stroke="#d4d4d4" stroke-width="1.2"/>
<line x1="0" y1="762.36" x2="45.5" y2="762.36" stroke="#c4c4c4" stroke-width="1.2"/>
<line x1="45.5" y1="797.89" x2="1500" y2="797.89" stroke="#d4d4d4" stroke-width="1.2"/>
<line x1="0" y1="797.89" x2="45.5" y2="797.89" stroke="#c4c4c4" stroke-width="1.2"/>
<line x1="45.5" y1="833.4200000000001" x2="1500" y2="833.4200000000001" stroke="#d4d4d4" stroke-width="1.2"/>
<line x1="0" y1="833.4200000000001" x2="45.5" y2="833.4200000000001" stroke="#c4c4c4" stroke-width="1.2"/>
<line x1="45.5" y1="868.95" x2="1500" y2="868.95" stroke="#d4d4d4" stroke-width="1.2"/>
<line x1="0" y1="868.95" x2="45.5" y2="868.95" stroke="#c4c4c4" stroke-width="1.2"/>
<line x1="45.5" y1="904.48" x2="1500" y2="904.48" stroke="#d4d4d4" stroke-width="1.2"/>
<line x1="0" y1="904.48" x2="45.5" y2="904.48" stroke="#c4c4c4" stroke-width="1.2"/>
<line x1="45.5" y1="940.01" x2="1500" y2="940.01" stroke="#d4d4d4" stroke-width="1.2"/>
<line x1="0" y1="940.01" x2="45.5" y2="940.01" stroke="#c4c4c4" stroke-width="1.2"/>
<line x1="296.2" y1="301" x2="296.2" y2="336" stroke="#b4b4b4" stroke-width="1.4"/>
<line x1="531" y1="301" x2="531" y2="336" stroke="#b4b4b4" stroke-width="1.4"/>
<line x1="538.2" y1="301" x2="538.2" y2="336" stroke="#b4b4b4" stroke-width="1.4"/>
<line x1="762.2" y1="301" x2="762.2" y2="336" stroke="#b4b4b4" stroke-width="1.4"/>
<line x1="769.5" y1="301" x2="769.5" y2="336" stroke="#b4b4b4" stroke-width="1.4"/>
<line x1="1059.3" y1="301" x2="1059.3" y2="336" stroke="#b4b4b4" stroke-width="1.4"/>
<line x1="1066.2" y1="301" x2="1066.2" y2="336" stroke="#b4b4b4" stroke-width="1.4"/>
<line x1="1374" y1="301" x2="1374" y2="336" stroke="#b4b4b4" stroke-width="1.4"/>
<line x1="1494.5" y1="301" x2="1494.5" y2="336" stroke="#b4b4b4" stroke-width="1.4"/>
<line x1="45.5" y1="301" x2="45.5" y2="945" stroke="#9f9f9f" stroke-width="1.4"/>
<rect x="0" y="335" width="1500" height="2" fill="#b4b4b4"/>
<text x="172.3" y="328.0" font-size="22" fill="#222" font-weight="normal" font-style="normal" font-family="Liberation Sans" stroke="#222" stroke-width="0.35" text-anchor="middle">E</text>
<text x="416.5" y="328.0" font-size="22" fill="#222" font-weight="normal" font-style="normal" font-family="Liberation Sans" stroke="#222" stroke-width="0.35" text-anchor="middle">F</text>
<text x="650.0" y="328.0" font-size="22" fill="#222" font-weight="normal" font-style="normal" font-family="Liberation Sans" stroke="#222" stroke-width="0.35" text-anchor="middle">I</text>
<text x="914.8" y="328.0" font-size="22" fill="#222" font-weight="normal" font-style="normal" font-family="Liberation Sans" stroke="#222" stroke-width="0.35" text-anchor="middle">K</text>
<text x="1218.3" y="328.0" font-size="22" fill="#222" font-weight="normal" font-style="normal" font-family="Liberation Sans" stroke="#222" stroke-width="0.35" text-anchor="middle">M</text>
<text x="1435.5" y="328.0" font-size="22" fill="#222" font-weight="normal" font-style="normal" font-family="Liberation Sans" stroke="#222" stroke-width="0.35" text-anchor="middle">N</text>
<text x="22.6" y="363.2" font-size="22" fill="#222" font-weight="normal" font-style="normal" font-family="Liberation Sans" stroke="#222" stroke-width="0.35" text-anchor="middle">1</text>
<text x="22.6" y="398.7" font-size="22" fill="#222" font-weight="normal" font-style="normal" font-family="Liberation Sans" stroke="#222" stroke-width="0.35" text-anchor="middle">2</text>
<text x="22.6" y="434.3" font-size="22" fill="#222" font-weight="normal" font-style="normal" font-family="Liberation Sans" stroke="#222" stroke-width="0.35" text-anchor="middle">3</text>
<text x="22.6" y="469.8" font-size="22" fill="#222" font-weight="normal" font-style="normal" font-family="Liberation Sans" stroke="#222" stroke-width="0.35" text-anchor="middle">4</text>
<text x="22.6" y="505.3" font-size="22" fill="#222" font-weight="normal" font-style="normal" font-family="Liberation Sans" stroke="#222" stroke-width="0.35" text-anchor="middle">5</text>
<text x="22.6" y="540.9" font-size="22" fill="#222" font-weight="normal" font-style="normal" font-family="Liberation Sans" stroke="#222" stroke-width="0.35" text-anchor="middle">6</text>
<text x="22.6" y="576.4" font-size="22" fill="#222" font-weight="normal" font-style="normal" font-family="Liberation Sans" stroke="#222" stroke-width="0.35" text-anchor="middle">7</text>
<text x="22.6" y="611.9" font-size="22" fill="#222" font-weight="normal" font-style="normal" font-family="Liberation Sans" stroke="#222" stroke-width="0.35" text-anchor="middle">8</text>
<text x="22.6" y="647.4" font-size="22" fill="#222" font-weight="normal" font-style="normal" font-family="Liberation Sans" stroke="#222" stroke-width="0.35" text-anchor="middle">9</text>
<text x="22.6" y="683.0" font-size="22" fill="#222" font-weight="normal" font-style="normal" font-family="Liberation Sans" stroke="#222" stroke-width="0.35" text-anchor="middle">10</text>
<text x="22.6" y="718.5" font-size="22" fill="#222" font-weight="normal" font-style="normal" font-family="Liberation Sans" stroke="#222" stroke-width="0.35" text-anchor="middle">11</text>
<text x="22.6" y="754.0" font-size="22" fill="#217346" font-weight="normal" font-style="normal" font-family="Liberation Sans" stroke="#217346" stroke-width="0.35" text-anchor="middle">12</text>
<text x="22.6" y="789.6" font-size="22" fill="#222" font-weight="normal" font-style="normal" font-family="Liberation Sans" stroke="#222" stroke-width="0.35" text-anchor="middle">13</text>
<text x="22.6" y="825.1" font-size="22" fill="#222" font-weight="normal" font-style="normal" font-family="Liberation Sans" stroke="#222" stroke-width="0.35" text-anchor="middle">14</text>
<text x="22.6" y="860.6" font-size="22" fill="#222" font-weight="normal" font-style="normal" font-family="Liberation Sans" stroke="#222" stroke-width="0.35" text-anchor="middle">15</text>
<text x="22.6" y="896.2" font-size="22" fill="#222" font-weight="normal" font-style="normal" font-family="Liberation Sans" stroke="#222" stroke-width="0.35" text-anchor="middle">16</text>
<text x="22.6" y="931.7" font-size="22" fill="#222" font-weight="normal" font-style="normal" font-family="Liberation Sans" stroke="#222" stroke-width="0.35" text-anchor="middle">17</text>
<rect x="43" y="726.83" width="3" height="35.53" fill="#217346"/>
<text x="50.5" y="363.2" font-size="22.5" fill="#222" font-weight="normal" font-style="normal" font-family="Liberation Sans" textLength="239.5" lengthAdjust="spacingAndGlyphs" stroke="#222" stroke-width="0.3">harga_awal (opsional)</text>
<text x="301.3" y="363.2" font-size="22.5" fill="#222" font-weight="normal" font-style="normal" font-family="Liberation Sans" textLength="227.0" lengthAdjust="spacingAndGlyphs" stroke="#222" stroke-width="0.3">harga_promo (wajib)</text>
<text x="539.6" y="363.2" font-size="22.5" fill="#222" font-weight="normal" font-style="normal" font-family="Liberation Sans" textLength="212.8" lengthAdjust="spacingAndGlyphs" stroke="#222" stroke-width="0.3">stok_promo (wajib)</text>
<text x="770.9" y="363.2" font-size="22.5" fill="#222" font-weight="normal" font-style="normal" font-family="Liberation Sans" textLength="64.5" lengthAdjust="spacingAndGlyphs" stroke="#222" stroke-width="0.3">status</text>
<text x="1067.6" y="363.2" font-size="22.5" fill="#222" font-weight="normal" font-style="normal" font-family="Liberation Sans" textLength="389.2" lengthAdjust="spacingAndGlyphs" stroke="#222" stroke-width="0.3">Aksi (satu nomor dalam satu waktu)</text>
<text x="50.7" y="398.7" font-size="22.5" fill="#222" font-weight="normal" font-style="normal" font-family="Liberation Sans" textLength="61.0" lengthAdjust="spacingAndGlyphs" stroke="#222" stroke-width="0.3">25000</text>
<text x="301.1" y="398.7" font-size="22.5" fill="#222" font-weight="normal" font-style="normal" font-family="Liberation Sans" textLength="61.0" lengthAdjust="spacingAndGlyphs" stroke="#222" stroke-width="0.3">20000</text>
<text x="538.5" y="398.7" font-size="22.5" fill="#222" font-weight="normal" font-style="normal" font-family="Liberation Sans" textLength="12.2" lengthAdjust="spacingAndGlyphs" stroke="#222" stroke-width="0.3">2</text>
<text x="770.9" y="398.7" font-size="22.5" fill="#222" font-weight="normal" font-style="normal" font-family="Liberation Sans" textLength="215.6" lengthAdjust="spacingAndGlyphs" stroke="#222" stroke-width="0.3">Dalam Pemeriksaan</text>
<path d="M46.2,372.33 L55.7,372.33 L46.2,381.83 Z" fill="#0b8a0b" stroke="none" stroke-width="1"/>
<path d="M297,372.33 L306.5,372.33 L297,381.83 Z" fill="#0b8a0b" stroke="none" stroke-width="1"/>
<path d="M535.3,372.33 L544.8,372.33 L535.3,381.83 Z" fill="#0b8a0b" stroke="none" stroke-width="1"/>
<text x="50.7" y="434.3" font-size="22.5" fill="#222" font-weight="normal" font-style="normal" font-family="Liberation Sans" textLength="61.0" lengthAdjust="spacingAndGlyphs" stroke="#222" stroke-width="0.3">25000</text>
<text x="301.1" y="434.3" font-size="22.5" fill="#222" font-weight="normal" font-style="normal" font-family="Liberation Sans" textLength="61.0" lengthAdjust="spacingAndGlyphs" stroke="#222" stroke-width="0.3">20000</text>
<text x="538.5" y="434.3" font-size="22.5" fill="#222" font-weight="normal" font-style="normal" font-family="Liberation Sans" textLength="12.2" lengthAdjust="spacingAndGlyphs" stroke="#222" stroke-width="0.3">5</text>
<text x="770.9" y="434.3" font-size="22.5" fill="#222" font-weight="normal" font-style="normal" font-family="Liberation Sans" textLength="215.6" lengthAdjust="spacingAndGlyphs" stroke="#222" stroke-width="0.3">Dalam Pemeriksaan</text>
<path d="M46.2,407.86 L55.7,407.86 L46.2,417.36 Z" fill="#0b8a0b" stroke="none" stroke-width="1"/>
<path d="M297,407.86 L306.5,407.86 L297,417.36 Z" fill="#0b8a0b" stroke="none" stroke-width="1"/>
<path d="M535.3,407.86 L544.8,407.86 L535.3,417.36 Z" fill="#0b8a0b" stroke="none" stroke-width="1"/>
<text x="50.7" y="469.8" font-size="22.5" fill="#222" font-weight="normal" font-style="normal" font-family="Liberation Sans" textLength="61.0" lengthAdjust="spacingAndGlyphs" stroke="#222" stroke-width="0.3">45000</text>
<text x="301.1" y="469.8" font-size="22.5" fill="#222" font-weight="normal" font-style="normal" font-family="Liberation Sans" textLength="61.0" lengthAdjust="spacingAndGlyphs" stroke="#222" stroke-width="0.3">20000</text>
<text x="538.5" y="469.8" font-size="22.5" fill="#222" font-weight="normal" font-style="normal" font-family="Liberation Sans" textLength="12.2" lengthAdjust="spacingAndGlyphs" stroke="#222" stroke-width="0.3">2</text>
<text x="770.9" y="469.8" font-size="22.5" fill="#222" font-weight="normal" font-style="normal" font-family="Liberation Sans" textLength="276.5" lengthAdjust="spacingAndGlyphs" stroke="#222" stroke-width="0.3">Menunggu Konfirmasimu</text>
<path d="M46.2,443.39000000000004 L55.7,443.39000000000004 L46.2,452.89000000000004 Z" fill="#0b8a0b" stroke="none" stroke-width="1"/>
<path d="M297,443.39000000000004 L306.5,443.39000000000004 L297,452.89000000000004 Z" fill="#0b8a0b" stroke="none" stroke-width="1"/>
<path d="M535.3,443.39000000000004 L544.8,443.39000000000004 L535.3,452.89000000000004 Z" fill="#0b8a0b" stroke="none" stroke-width="1"/>
<text x="50.7" y="505.3" font-size="22.5" fill="#222" font-weight="normal" font-style="normal" font-family="Liberation Sans" textLength="61.0" lengthAdjust="spacingAndGlyphs" stroke="#222" stroke-width="0.3">50000</text>
<text x="301.1" y="505.3" font-size="22.5" fill="#222" font-weight="normal" font-style="normal" font-family="Liberation Sans" textLength="61.0" lengthAdjust="spacingAndGlyphs" stroke="#222" stroke-width="0.3">20000</text>
<text x="538.5" y="505.3" font-size="22.5" fill="#222" font-weight="normal" font-style="normal" font-family="Liberation Sans" textLength="12.2" lengthAdjust="spacingAndGlyphs" stroke="#222" stroke-width="0.3">2</text>
<text x="770.9" y="505.3" font-size="22.5" fill="#222" font-weight="normal" font-style="normal" font-family="Liberation Sans" textLength="276.5" lengthAdjust="spacingAndGlyphs" stroke="#222" stroke-width="0.3">Menunggu Konfirmasimu</text>
<path d="M46.2,478.92 L55.7,478.92 L46.2,488.42 Z" fill="#0b8a0b" stroke="none" stroke-width="1"/>
<path d="M297,478.92 L306.5,478.92 L297,488.42 Z" fill="#0b8a0b" stroke="none" stroke-width="1"/>
<path d="M535.3,478.92 L544.8,478.92 L535.3,488.42 Z" fill="#0b8a0b" stroke="none" stroke-width="1"/>
<text x="50.7" y="540.9" font-size="22.5" fill="#222" font-weight="normal" font-style="normal" font-family="Liberation Sans" textLength="61.0" lengthAdjust="spacingAndGlyphs" stroke="#222" stroke-width="0.3">50000</text>
<text x="301.1" y="540.9" font-size="22.5" fill="#222" font-weight="normal" font-style="normal" font-family="Liberation Sans" textLength="61.0" lengthAdjust="spacingAndGlyphs" stroke="#222" stroke-width="0.3">20000</text>
<text x="538.5" y="540.9" font-size="22.5" fill="#222" font-weight="normal" font-style="normal" font-family="Liberation Sans" textLength="12.2" lengthAdjust="spacingAndGlyphs" stroke="#222" stroke-width="0.3">2</text>
<text x="770.9" y="540.9" font-size="22.5" fill="#222" font-weight="normal" font-style="normal" font-family="Liberation Sans" textLength="276.5" lengthAdjust="spacingAndGlyphs" stroke="#222" stroke-width="0.3">Menunggu Konfirmasimu</text>
<path d="M46.2,514.4499999999999 L55.7,514.4499999999999 L46.2,523.9499999999999 Z" fill="#0b8a0b" stroke="none" stroke-width="1"/>
<path d="M297,514.4499999999999 L306.5,514.4499999999999 L297,523.9499999999999 Z" fill="#0b8a0b" stroke="none" stroke-width="1"/>
<path d="M535.3,514.4499999999999 L544.8,514.4499999999999 L535.3,523.9499999999999 Z" fill="#0b8a0b" stroke="none" stroke-width="1"/>
<text x="50.7" y="576.4" font-size="22.5" fill="#222" font-weight="normal" font-style="normal" font-family="Liberation Sans" textLength="61.0" lengthAdjust="spacingAndGlyphs" stroke="#222" stroke-width="0.3">55000</text>
<text x="301.1" y="576.4" font-size="22.5" fill="#222" font-weight="normal" font-style="normal" font-family="Liberation Sans" textLength="61.0" lengthAdjust="spacingAndGlyphs" stroke="#222" stroke-width="0.3">20000</text>
<text x="538.5" y="576.4" font-size="22.5" fill="#222" font-weight="normal" font-style="normal" font-family="Liberation Sans" textLength="12.2" lengthAdjust="spacingAndGlyphs" stroke="#222" stroke-width="0.3">2</text>
<text x="770.9" y="576.4" font-size="22.5" fill="#222" font-weight="normal" font-style="normal" font-family="Liberation Sans" textLength="276.5" lengthAdjust="spacingAndGlyphs" stroke="#222" stroke-width="0.3">Menunggu Konfirmasimu</text>
<path d="M46.2,549.98 L55.7,549.98 L46.2,559.48 Z" fill="#0b8a0b" stroke="none" stroke-width="1"/>
<path d="M297,549.98 L306.5,549.98 L297,559.48 Z" fill="#0b8a0b" stroke="none" stroke-width="1"/>
<path d="M535.3,549.98 L544.8,549.98 L535.3,559.48 Z" fill="#0b8a0b" stroke="none" stroke-width="1"/>
<text x="50.7" y="611.9" font-size="22.5" fill="#222" font-weight="normal" font-style="normal" font-family="Liberation Sans" textLength="61.0" lengthAdjust="spacingAndGlyphs" stroke="#222" stroke-width="0.3">50000</text>
<text x="301.1" y="611.9" font-size="22.5" fill="#222" font-weight="normal" font-style="normal" font-family="Liberation Sans" textLength="61.0" lengthAdjust="spacingAndGlyphs" stroke="#222" stroke-width="0.3">20000</text>
<text x="538.5" y="611.9" font-size="22.5" fill="#222" font-weight="normal" font-style="normal" font-family="Liberation Sans" textLength="12.2" lengthAdjust="spacingAndGlyphs" stroke="#222" stroke-width="0.3">2</text>
<text x="770.9" y="611.9" font-size="22.5" fill="#222" font-weight="normal" font-style="normal" font-family="Liberation Sans" textLength="276.5" lengthAdjust="spacingAndGlyphs" stroke="#222" stroke-width="0.3">Menunggu Konfirmasimu</text>
<path d="M46.2,585.51 L55.7,585.51 L46.2,595.01 Z" fill="#0b8a0b" stroke="none" stroke-width="1"/>
<path d="M297,585.51 L306.5,585.51 L297,595.01 Z" fill="#0b8a0b" stroke="none" stroke-width="1"/>
<path d="M535.3,585.51 L544.8,585.51 L535.3,595.01 Z" fill="#0b8a0b" stroke="none" stroke-width="1"/>
<text x="50.7" y="647.4" font-size="22.5" fill="#222" font-weight="normal" font-style="normal" font-family="Liberation Sans" textLength="61.0" lengthAdjust="spacingAndGlyphs" stroke="#222" stroke-width="0.3">25000</text>
<text x="301.1" y="647.4" font-size="22.5" fill="#222" font-weight="normal" font-style="normal" font-family="Liberation Sans" textLength="61.0" lengthAdjust="spacingAndGlyphs" stroke="#222" stroke-width="0.3">20000</text>
<text x="538.5" y="647.4" font-size="22.5" fill="#222" font-weight="normal" font-style="normal" font-family="Liberation Sans" textLength="12.2" lengthAdjust="spacingAndGlyphs" stroke="#222" stroke-width="0.3">2</text>
<text x="770.9" y="647.4" font-size="22.5" fill="#222" font-weight="normal" font-style="normal" font-family="Liberation Sans" textLength="276.5" lengthAdjust="spacingAndGlyphs" stroke="#222" stroke-width="0.3">Menunggu Konfirmasimu</text>
<path d="M46.2,621.04 L55.7,621.04 L46.2,630.54 Z" fill="#0b8a0b" stroke="none" stroke-width="1"/>
<path d="M297,621.04 L306.5,621.04 L297,630.54 Z" fill="#0b8a0b" stroke="none" stroke-width="1"/>
<path d="M535.3,621.04 L544.8,621.04 L535.3,630.54 Z" fill="#0b8a0b" stroke="none" stroke-width="1"/>
<text x="50.7" y="683.0" font-size="22.5" fill="#222" font-weight="normal" font-style="normal" font-family="Liberation Sans" textLength="61.0" lengthAdjust="spacingAndGlyphs" stroke="#222" stroke-width="0.3">25000</text>
<text x="301.1" y="683.0" font-size="22.5" fill="#222" font-weight="normal" font-style="normal" font-family="Liberation Sans" textLength="61.0" lengthAdjust="spacingAndGlyphs" stroke="#222" stroke-width="0.3">20000</text>
<text x="538.5" y="683.0" font-size="22.5" fill="#222" font-weight="normal" font-style="normal" font-family="Liberation Sans" textLength="12.2" lengthAdjust="spacingAndGlyphs" stroke="#222" stroke-width="0.3">2</text>
<text x="770.9" y="683.0" font-size="22.5" fill="#222" font-weight="normal" font-style="normal" font-family="Liberation Sans" textLength="276.5" lengthAdjust="spacingAndGlyphs" stroke="#222" stroke-width="0.3">Menunggu Konfirmasimu</text>
<path d="M46.2,656.5699999999999 L55.7,656.5699999999999 L46.2,666.0699999999999 Z" fill="#0b8a0b" stroke="none" stroke-width="1"/>
<path d="M297,656.5699999999999 L306.5,656.5699999999999 L297,666.0699999999999 Z" fill="#0b8a0b" stroke="none" stroke-width="1"/>
<path d="M535.3,656.5699999999999 L544.8,656.5699999999999 L535.3,666.0699999999999 Z" fill="#0b8a0b" stroke="none" stroke-width="1"/>
<text x="50.7" y="718.5" font-size="22.5" fill="#222" font-weight="normal" font-style="normal" font-family="Liberation Sans" textLength="61.0" lengthAdjust="spacingAndGlyphs" stroke="#222" stroke-width="0.3">25000</text>
<text x="301.1" y="718.5" font-size="22.5" fill="#222" font-weight="normal" font-style="normal" font-family="Liberation Sans" textLength="61.0" lengthAdjust="spacingAndGlyphs" stroke="#222" stroke-width="0.3">20000</text>
<text x="538.5" y="718.5" font-size="22.5" fill="#222" font-weight="normal" font-style="normal" font-family="Liberation Sans" textLength="12.2" lengthAdjust="spacingAndGlyphs" stroke="#222" stroke-width="0.3">2</text>
<text x="770.9" y="718.5" font-size="22.5" fill="#222" font-weight="normal" font-style="normal" font-family="Liberation Sans" textLength="276.5" lengthAdjust="spacingAndGlyphs" stroke="#222" stroke-width="0.3">Menunggu Konfirmasimu</text>
<path d="M46.2,692.0999999999999 L55.7,692.0999999999999 L46.2,701.5999999999999 Z" fill="#0b8a0b" stroke="none" stroke-width="1"/>
<path d="M297,692.0999999999999 L306.5,692.0999999999999 L297,701.5999999999999 Z" fill="#0b8a0b" stroke="none" stroke-width="1"/>
<path d="M535.3,692.0999999999999 L544.8,692.0999999999999 L535.3,701.5999999999999 Z" fill="#0b8a0b" stroke="none" stroke-width="1"/>
<text x="50.7" y="754.0" font-size="22.5" fill="#222" font-weight="normal" font-style="normal" font-family="Liberation Sans" textLength="61.0" lengthAdjust="spacingAndGlyphs" stroke="#222" stroke-width="0.3">25000</text>
<text x="301.1" y="754.0" font-size="22.5" fill="#222" font-weight="normal" font-style="normal" font-family="Liberation Sans" textLength="61.0" lengthAdjust="spacingAndGlyphs" stroke="#222" stroke-width="0.3">20000</text>
<text x="538.5" y="754.0" font-size="22.5" fill="#222" font-weight="normal" font-style="normal" font-family="Liberation Sans" textLength="12.2" lengthAdjust="spacingAndGlyphs" stroke="#222" stroke-width="0.3">2</text>
<text x="770.9" y="754.0" font-size="22.5" fill="#222" font-weight="normal" font-style="normal" font-family="Liberation Sans" textLength="276.5" lengthAdjust="spacingAndGlyphs" stroke="#222" stroke-width="0.3">Menunggu Konfirmasimu</text>
<path d="M46.2,727.63 L55.7,727.63 L46.2,737.13 Z" fill="#0b8a0b" stroke="none" stroke-width="1"/>
<path d="M297,727.63 L306.5,727.63 L297,737.13 Z" fill="#0b8a0b" stroke="none" stroke-width="1"/>
<path d="M535.3,727.63 L544.8,727.63 L535.3,737.13 Z" fill="#0b8a0b" stroke="none" stroke-width="1"/>
<text x="50.7" y="789.6" font-size="22.5" fill="#222" font-weight="normal" font-style="normal" font-family="Liberation Sans" textLength="61.0" lengthAdjust="spacingAndGlyphs" stroke="#222" stroke-width="0.3">20000</text>
<text x="301.1" y="789.6" font-size="22.5" fill="#222" font-weight="normal" font-style="normal" font-family="Liberation Sans" textLength="61.0" lengthAdjust="spacingAndGlyphs" stroke="#222" stroke-width="0.3">20000</text>
<text x="538.5" y="789.6" font-size="22.5" fill="#222" font-weight="normal" font-style="normal" font-family="Liberation Sans" textLength="12.2" lengthAdjust="spacingAndGlyphs" stroke="#222" stroke-width="0.3">2</text>
<text x="770.9" y="789.6" font-size="22.5" fill="#222" font-weight="normal" font-style="normal" font-family="Liberation Sans" textLength="276.5" lengthAdjust="spacingAndGlyphs" stroke="#222" stroke-width="0.3">Menunggu Konfirmasimu</text>
<path d="M46.2,763.16 L55.7,763.16 L46.2,772.66 Z" fill="#0b8a0b" stroke="none" stroke-width="1"/>
<path d="M297,763.16 L306.5,763.16 L297,772.66 Z" fill="#0b8a0b" stroke="none" stroke-width="1"/>
<path d="M535.3,763.16 L544.8,763.16 L535.3,772.66 Z" fill="#0b8a0b" stroke="none" stroke-width="1"/>
<text x="50.7" y="825.1" font-size="22.5" fill="#222" font-weight="normal" font-style="normal" font-family="Liberation Sans" textLength="61.0" lengthAdjust="spacingAndGlyphs" stroke="#222" stroke-width="0.3">25000</text>
<text x="301.1" y="825.1" font-size="22.5" fill="#222" font-weight="normal" font-style="normal" font-family="Liberation Sans" textLength="61.0" lengthAdjust="spacingAndGlyphs" stroke="#222" stroke-width="0.3">20000</text>
<text x="538.5" y="825.1" font-size="22.5" fill="#222" font-weight="normal" font-style="normal" font-family="Liberation Sans" textLength="12.2" lengthAdjust="spacingAndGlyphs" stroke="#222" stroke-width="0.3">2</text>
<text x="770.9" y="825.1" font-size="22.5" fill="#222" font-weight="normal" font-style="normal" font-family="Liberation Sans" textLength="276.5" lengthAdjust="spacingAndGlyphs" stroke="#222" stroke-width="0.3">Menunggu Konfirmasimu</text>
<path d="M46.2,798.6899999999999 L55.7,798.6899999999999 L46.2,808.1899999999999 Z" fill="#0b8a0b" stroke="none" stroke-width="1"/>
<path d="M297,798.6899999999999 L306.5,798.6899999999999 L297,808.1899999999999 Z" fill="#0b8a0b" stroke="none" stroke-width="1"/>
<path d="M535.3,798.6899999999999 L544.8,798.6899999999999 L535.3,808.1899999999999 Z" fill="#0b8a0b" stroke="none" stroke-width="1"/>
<text x="50.7" y="860.6" font-size="22.5" fill="#222" font-weight="normal" font-style="normal" font-family="Liberation Sans" textLength="61.0" lengthAdjust="spacingAndGlyphs" stroke="#222" stroke-width="0.3">25000</text>
<text x="301.1" y="860.6" font-size="22.5" fill="#222" font-weight="normal" font-style="normal" font-family="Liberation Sans" textLength="61.0" lengthAdjust="spacingAndGlyphs" stroke="#222" stroke-width="0.3">20000</text>
<text x="538.5" y="860.6" font-size="22.5" fill="#222" font-weight="normal" font-style="normal" font-family="Liberation Sans" textLength="12.2" lengthAdjust="spacingAndGlyphs" stroke="#222" stroke-width="0.3">2</text>
<text x="770.9" y="860.6" font-size="22.5" fill="#222" font-weight="normal" font-style="normal" font-family="Liberation Sans" textLength="276.5" lengthAdjust="spacingAndGlyphs" stroke="#222" stroke-width="0.3">Menunggu Konfirmasimu</text>
<path d="M46.2,834.22 L55.7,834.22 L46.2,843.72 Z" fill="#0b8a0b" stroke="none" stroke-width="1"/>
<path d="M297,834.22 L306.5,834.22 L297,843.72 Z" fill="#0b8a0b" stroke="none" stroke-width="1"/>
<path d="M535.3,834.22 L544.8,834.22 L535.3,843.72 Z" fill="#0b8a0b" stroke="none" stroke-width="1"/>
<text x="50.7" y="896.2" font-size="22.5" fill="#222" font-weight="normal" font-style="normal" font-family="Liberation Sans" textLength="61.0" lengthAdjust="spacingAndGlyphs" stroke="#222" stroke-width="0.3">50000</text>
<text x="301.1" y="896.2" font-size="22.5" fill="#222" font-weight="normal" font-style="normal" font-family="Liberation Sans" textLength="61.0" lengthAdjust="spacingAndGlyphs" stroke="#222" stroke-width="0.3">20000</text>
<text x="538.5" y="896.2" font-size="22.5" fill="#222" font-weight="normal" font-style="normal" font-family="Liberation Sans" textLength="12.2" lengthAdjust="spacingAndGlyphs" stroke="#222" stroke-width="0.3">2</text>
<text x="770.9" y="896.2" font-size="22.5" fill="#222" font-weight="normal" font-style="normal" font-family="Liberation Sans" textLength="276.5" lengthAdjust="spacingAndGlyphs" stroke="#222" stroke-width="0.3">Menunggu Konfirmasimu</text>
<path d="M46.2,869.75 L55.7,869.75 L46.2,879.25 Z" fill="#0b8a0b" stroke="none" stroke-width="1"/>
<path d="M297,869.75 L306.5,869.75 L297,879.25 Z" fill="#0b8a0b" stroke="none" stroke-width="1"/>
<path d="M535.3,869.75 L544.8,869.75 L535.3,879.25 Z" fill="#0b8a0b" stroke="none" stroke-width="1"/>
<rect x="533" y="339" width="231" height="567.6" fill="none" stroke="#e9482a" stroke-width="4"/>
<rect x="1058.5" y="339" width="408.5" height="567.6" fill="none" stroke="#e9482a" stroke-width="4"/></svg>
</body></html>
